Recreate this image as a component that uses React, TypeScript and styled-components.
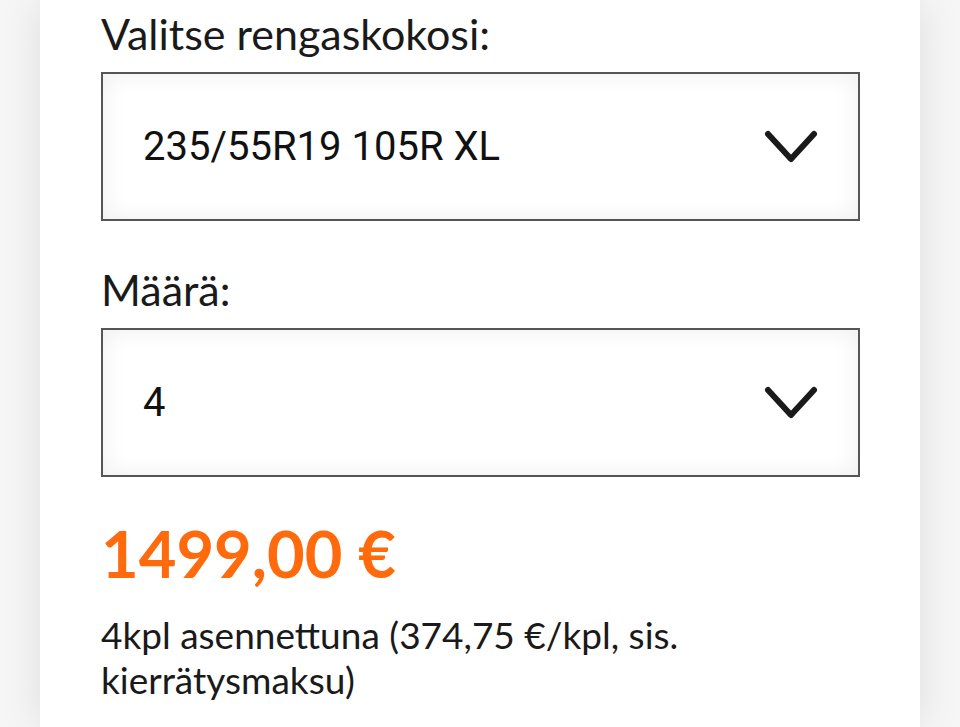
import styled, { createGlobalStyle } from 'styled-components';

const GlobalStyle = createGlobalStyle`
  html, body {
    margin: 0;
    padding: 0;
    background: #f6f6f6;
  }
`;

const Page = styled.div`
  height: 727px;
  overflow: hidden;
  background: #f6f6f6;
  padding: 0 40px;
  box-sizing: border-box;
`;

const Card = styled.div`
  height: 100%;
  background: #fff;
  box-shadow: 0 0 40px rgba(0, 0, 0, 0.1);
  padding: 6px 60px 0 61px;
  box-sizing: border-box;
  font-family: Lato, 'Noto Sans', sans-serif;
  color: #1a1a1a;
`;

const Field = styled.div`
  display: flex;
  flex-direction: column;
  margin-bottom: 41px;
`;

const Label = styled.label`
  font-size: 43px;
  line-height: 56px;
  margin-bottom: 10px;
`;

const Select = styled.div`
  display: flex;
  align-items: center;
  justify-content: space-between;
  height: 149px;
  box-sizing: border-box;
  border: 2px solid #555;
  background: #fff;
  box-shadow: inset 0 0 24px rgba(0, 0, 0, 0.07);
  padding: 0 40px 0 40px;
  font-family: Roboto, sans-serif;
  font-size: 40px;
  color: #111;
`;

const Chevron = () => (
  <svg width="54" height="34" viewBox="0 0 54 34">
    <path
      d="M4 4 L27 29 L50 4"
      fill="none"
      stroke="#1a1a1a"
      strokeWidth="6"
      strokeLinecap="round"
      strokeLinejoin="round"
    />
  </svg>
);

const Price = styled.div`
  font-size: 65px;
  font-weight: 700;
  color: #ff6a0d;
  line-height: 70px;
  margin-top: 13px;
`;

const Note = styled.p`
  margin: 24px 0 0;
  font-size: 37px;
  line-height: 45px;
  color: #1a1a1a;
`;

export default function App() {
  return (
    <>
      <GlobalStyle />
      <Page>
        <Card>
          <Field>
            <Label>Valitse rengaskokosi:</Label>
            <Select>
              <span>235/55R19 105R XL</span>
              <Chevron />
            </Select>
          </Field>
          <Field>
            <Label>Määrä:</Label>
            <Select>
              <span>4</span>
              <Chevron />
            </Select>
          </Field>
          <Price>1499,00 €</Price>
          <Note>4kpl asennettuna (374,75 €/kpl, sis. kierrätysmaksu)</Note>
        </Card>
      </Page>
    </>
  );
}
